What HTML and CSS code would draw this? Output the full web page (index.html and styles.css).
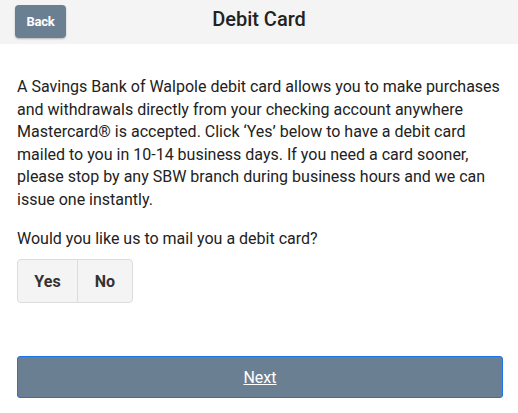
FILE: index.html
```html
<!DOCTYPE html>
<html>
<head>
<meta charset="utf-8">
<link rel="stylesheet" href="styles.css">
</head>
<body>
<header class="topbar">
  <button class="back">Back</button>
  <h1 class="title">Debit Card</h1>
</header>
<main class="content">
  <p class="intro">A Savings Bank of Walpole debit card allows you to make purchases and withdrawals directly from your checking account anywhere Mastercard® is accepted. Click ‘Yes’ below to have a debit card mailed to you in 10-14 business days. If you need a card sooner, please stop by any SBW branch during business hours and we can issue one instantly.</p>
  <p class="question">Would you like us to mail you a debit card?</p>
  <div class="choice">
    <button class="opt">Yes</button>
    <button class="opt">No</button>
  </div>
  <button class="next"><span>Next</span></button>
</main>
</body>
</html>
```

FILE: styles.css
```css
* { box-sizing: border-box; }
html, body { margin: 0; padding: 0; background: #fff; }
body { font-family: Roboto, "Noto Sans", sans-serif; color: #222; width: 518px; }
.topbar {
  height: 44px;
  background: #f4f4f4;
  display: flex;
  align-items: center;
  position: relative;
  padding-left: 15px;
}
.back {
  width: 51px;
  height: 33px;
  margin-top: -1px;
  background: #6b7f93;
  color: #fff;
  border: none;
  border-radius: 4px;
  font-family: Roboto, sans-serif;
  font-weight: 700;
  font-size: 13px;
  letter-spacing: -0.3px;
  box-shadow: 0 1px 2px rgba(0,0,0,0.25);
  padding: 0;
}
.title {
  position: absolute;
  left: 0; right: 0;
  top: 0;
  margin: 0;
  line-height: 39px;
  text-align: center;
  font-size: 20px;
  font-weight: 500;
  color: #222;
  pointer-events: none;
}
.content { padding: 32px 17px 0 17px; }
.intro {
  margin: 0;
  font-size: 16px;
  line-height: 22.5px;
  color: #222;
}
.question {
  margin: 17px 0 0 0;
  font-size: 16px;
  line-height: 22.4px;
}
.choice {
  display: flex;
  margin-top: 9px;
  width: 116px;
  height: 44px;
  border: 1px solid #dcdcdc;
  border-radius: 4px;
  background: #f4f4f4;
  overflow: hidden;
}
.opt {
  background: transparent;
  border: none;
  font-family: Roboto, sans-serif;
  font-weight: 700;
  font-size: 16px;
  color: #333;
  padding: 0;
}
.opt:first-child { width: 60px; border-right: 1px solid #dcdcdc; }
.opt:last-child { flex: 1; }
.next {
  display: block;
  margin-top: 53px;
  width: 486px;
  height: 42px;
  background: #6b7f93;
  border: 1px solid #1a73e8;
  border-radius: 3px;
  color: #fff;
  font-family: Roboto, sans-serif;
  font-size: 16px;
  padding: 0;
}
.next span { text-decoration: underline; }
```
